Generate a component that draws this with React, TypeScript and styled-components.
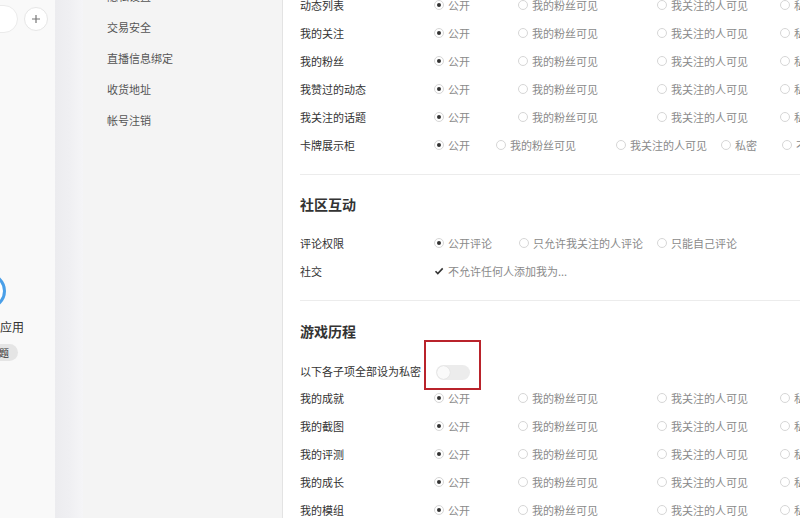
import React from "react";
import styled, { createGlobalStyle } from "styled-components";

const GlobalStyle = createGlobalStyle`
  html, body {
    margin: 0;
    padding: 0;
    width: 800px;
    height: 518px;
    overflow: hidden;
    background: #fff;
    font-family: "Noto Sans CJK SC", "Noto Sans", sans-serif;
  }
`;

const Page = styled.div`
  display: flex;
  width: 800px;
  height: 518px;
  overflow: hidden;
`;

const LeftPane = styled.div`
  width: 55px;
  flex-shrink: 0;
  background: #f9f9f9;
  overflow: hidden;
  display: flex;
  flex-direction: column;
`;

const SearchRow = styled.div`
  display: flex;
  align-items: center;
  gap: 6px;
  margin: 5px 0 0 -60px;
`;

const SearchBox = styled.div`
  width: 76px;
  height: 26px;
  border: 1px solid #ebebeb;
  border-radius: 14px;
  background: #fff;
  flex-shrink: 0;
`;

const PlusButton = styled.div`
  width: 22px;
  height: 22px;
  border-radius: 50%;
  border: 1px solid #e6e6e6;
  background: #fff;
  flex-shrink: 0;
  display: flex;
  align-items: center;
  justify-content: center;
`;

const AppBlock = styled.div`
  display: flex;
  flex-direction: column;
  align-items: flex-start;
  margin-top: 240px;
`;

const AppIcon = styled.div`
  width: 30px;
  height: 30px;
  border-radius: 50%;
  border: 3px solid #4a9fe8;
  background: #fff;
  margin-left: -30px;
`;

const AppName = styled.div`
  margin-top: 10px;
  font-size: 12px;
  line-height: 16px;
  color: #333;
  white-space: nowrap;
`;

const Pill = styled.div`
  margin: 9px 0 0 -20px;
  height: 17px;
  padding: 0 9px;
  border-radius: 9px;
  background: #e5e5e5;
  font-size: 10px;
  line-height: 17px;
  color: #333;
  white-space: nowrap;
`;

const Gutter = styled.div`
  width: 28px;
  flex-shrink: 0;
  background: linear-gradient(to right, #ececef 0%, #efeff2 50%, #f5f5f7 100%);
`;

const Menu = styled.nav`
  width: 199px;
  flex-shrink: 0;
  background: #f4f4f4;
  padding-left: 24px;
  box-sizing: border-box;
  margin-top: -19px;
  display: flex;
  flex-direction: column;
`;

const MenuItem = styled.div`
  height: 31px;
  line-height: 31px;
  font-size: 11px;
  color: #555;
  white-space: nowrap;
`;

const Content = styled.main`
  flex: 1;
  min-width: 0;
  background: #fff;
  border-left: 1px solid #e3e3e3;
  overflow: hidden;
  display: flex;
  flex-direction: column;
`;

const Section = styled.section`
  padding-left: 17px;
  display: flex;
  flex-direction: column;
`;

const FirstSection = styled(Section)`
  margin-top: -9px;
`;

const Divider = styled.hr`
  margin: 15px 0 0 17px;
  border: none;
  border-top: 1px solid #ececec;
  height: 0;
`;

const Heading = styled.h2<{ $top: number; $bottom: number }>`
  margin: ${({ $top, $bottom }) => `${$top}px 0 ${$bottom}px`};
  height: 20px;
  line-height: 20px;
  font-size: 14px;
  font-weight: 600;
  color: #333;
`;

const Row = styled.div<{ $h?: number }>`
  display: flex;
  align-items: center;
  height: ${({ $h }) => $h ?? 28}px;
  white-space: nowrap;
`;

const Label = styled.div`
  width: 134px;
  flex-shrink: 0;
  font-size: 11px;
  color: #333;
`;

const Option = styled.label<{ $w?: number }>`
  display: flex;
  align-items: center;
  flex-shrink: 0;
  width: ${({ $w }) => ($w ? `${$w}px` : "auto")};
  font-size: 11px;
  color: #8a8a8a;
`;

const Circle = styled.span<{ $checked?: boolean }>`
  position: relative;
  width: 10px;
  height: 10px;
  box-sizing: border-box;
  border-radius: 50%;
  border: 1px solid #d6d6d6;
  margin-right: 4px;
  flex-shrink: 0;
  background: #fff;

  &::after {
    content: "";
    position: absolute;
    left: 2px;
    top: 2px;
    width: 4px;
    height: 4px;
    border-radius: 50%;
    background: #333;
    display: ${({ $checked }) => ($checked ? "block" : "none")};
  }
`;

const Check = styled.svg`
  width: 10px;
  height: 10px;
  margin-right: 4px;
  flex-shrink: 0;
`;

const ToggleWrap = styled.div`
  position: relative;
  margin: 4px 0 0 2px;
`;

const Toggle = styled.div`
  width: 34px;
  height: 15px;
  border-radius: 8px;
  background: #ececec;
  display: flex;
  align-items: center;
  padding-left: 1px;
  box-sizing: border-box;
`;

const Knob = styled.span`
  width: 13px;
  height: 13px;
  border-radius: 50%;
  background: #fafafa;
  box-shadow: 0 0 1px rgba(0, 0, 0, 0.15);
`;

const Annotation = styled.div`
  position: absolute;
  left: -12px;
  top: -25px;
  width: 57px;
  height: 50px;
  box-sizing: border-box;
  border: 2px solid #b9232b;
  pointer-events: none;
`;

type Opt = { text: string; w?: number };

const visibility: Opt[] = [
  { text: "公开", w: 84 },
  { text: "我的粉丝可见", w: 139 },
  { text: "我关注的人可见", w: 123 },
  { text: "私密" },
];

const cardOptions: Opt[] = [
  { text: "公开", w: 62 },
  { text: "我的粉丝可见", w: 120 },
  { text: "我关注的人可见", w: 105 },
  { text: "私密", w: 61 },
  { text: "不展示" },
];

const commentOptions: Opt[] = [
  { text: "公开评论", w: 85 },
  { text: "只允许我关注的人评论", w: 138 },
  { text: "只能自己评论" },
];

function RadioRow({ label, options }: { label: string; options: Opt[] }) {
  return (
    <Row>
      <Label>{label}</Label>
      {options.map((o, i) => (
        <Option key={o.text} $w={o.w}>
          <Circle $checked={i === 0} />
          {o.text}
        </Option>
      ))}
    </Row>
  );
}

export default function App() {
  const menu = ["隐私设置", "交易安全", "直播信息绑定", "收货地址", "帐号注销"];
  const feed = ["动态列表", "我的关注", "我的粉丝", "我赞过的动态", "我关注的话题"];
  const games = ["我的成就", "我的截图", "我的评测", "我的成长", "我的模组"];

  return (
    <Page>
      <GlobalStyle />
      <LeftPane>
        <SearchRow>
          <SearchBox />
          <PlusButton>
            <svg width="10" height="10" viewBox="0 0 10 10">
              <path d="M5 1v8M1 5h8" stroke="#777" strokeWidth="1.2" />
            </svg>
          </PlusButton>
        </SearchRow>
        <AppBlock>
          <AppIcon />
          <AppName>应用</AppName>
          <Pill>主题</Pill>
        </AppBlock>
      </LeftPane>
      <Gutter />
      <Menu>
        {menu.map((m) => (
          <MenuItem key={m}>{m}</MenuItem>
        ))}
      </Menu>
      <Content>
        <FirstSection>
          {feed.map((f) => (
            <RadioRow key={f} label={f} options={visibility} />
          ))}
          <RadioRow label="卡牌展示柜" options={cardOptions} />
        </FirstSection>
        <Divider />
        <Section>
          <Heading $top={19} $bottom={15}>社区互动</Heading>
          <RadioRow label="评论权限" options={commentOptions} />
          <Row>
            <Label>社交</Label>
            <Option>
              <Check viewBox="0 0 10 10">
                <path d="M1.5 5.2l2.3 2.3L8.7 2.4" fill="none" stroke="#333" strokeWidth="1.6" />
              </Check>
              不允许任何人添加我为...
            </Option>
          </Row>
        </Section>
        <Divider />
        <Section>
          <Heading $top={20} $bottom={16}>游戏历程</Heading>
          <Row $h={27}>
            <Label>以下各子项全部设为私密</Label>
            <ToggleWrap>
              <Toggle>
                <Knob />
              </Toggle>
              <Annotation />
            </ToggleWrap>
          </Row>
          {games.map((g) => (
            <RadioRow key={g} label={g} options={visibility} />
          ))}
        </Section>
      </Content>
    </Page>
  );
}
